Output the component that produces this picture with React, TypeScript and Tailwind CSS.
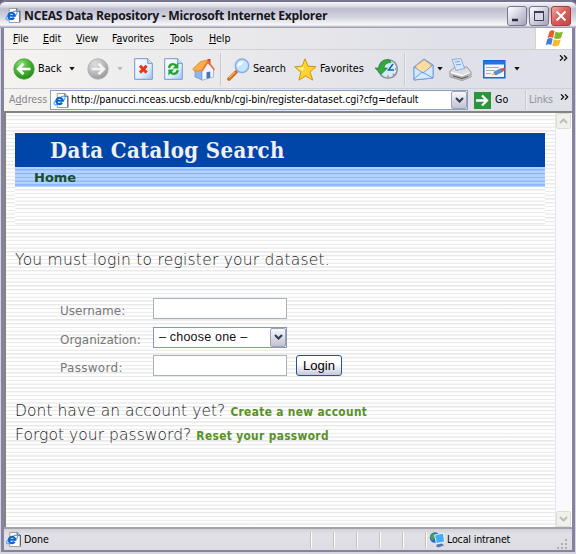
import React from "react";

const ui = "font-['DejaVu_Sans_Condensed','DejaVu_Sans',sans-serif] [font-stretch:condensed]";
const web = "font-['DejaVu_Sans',Verdana,sans-serif]";
const stripes = "bg-[repeating-linear-gradient(to_bottom,#ffffff_0px,#fdfdfd_2px,#e8e8e8_2.4px,#f0f0f0_3.4px,#ffffff_3.78px)]";
const link = "font-['DejaVu_Sans_Condensed','DejaVu_Sans',sans-serif] [font-stretch:condensed] text-[11.8px] font-bold tracking-[0.36px] text-[#579126]";

function Page({ className = "" }: { className?: string }) {
  return (
    <svg viewBox="0 0 16 16" className={"shrink-0 " + className}>
      <path d="M4 .5h8l3.3 3V15.5H4z" fill="#fffdf4" stroke="#96959f" />
      <path d="M12 .5v3h3.3V15" fill="none" stroke="#4d4d55" />
      <ellipse cx="6.5" cy="8" rx="7" ry="2.4" transform="rotate(-35 6.5 8)" fill="none" stroke="#4ba5f0" strokeWidth="1.2" />
      <path d="M3.3 8.3h6.6A3.4 3.4 0 1 0 9.2 10.6" fill="none" stroke="#1263d0" strokeWidth="2.3" />
    </svg>
  );
}

function Disc({ gray = false }: { gray?: boolean }) {
  return (
    <svg viewBox="0 0 22 22" className="h-[22px] w-[22px]">
      <defs>
        <radialGradient id={gray ? "dg" : "db"} cx=".35" cy=".25" r=".8">
          <stop stopColor={gray ? "#dedede" : "#8bdb72"} />
          <stop offset=".55" stopColor={gray ? "#bcbcbe" : "#42b32d"} />
          <stop offset="1" stopColor={gray ? "#98989c" : "#208718"} />
        </radialGradient>
      </defs>
      <circle cx="11" cy="11" r="10.2" fill={gray ? "url(#dg)" : "url(#db)"} stroke={gray ? "#aaa" : "#42993a"} strokeWidth=".8" />
      <path d={gray ? "M4.5 11h12M11.5 5.7l5.3 5.3-5.3 5.3" : "M17.5 11h-12M10.5 5.7 5.2 11l5.3 5.3"} fill="none" stroke={gray ? "#f4f4f4" : "#fff"} strokeWidth="2.7" />
    </svg>
  );
}

function Sheet({ refresh = false }: { refresh?: boolean }) {
  return (
    <svg viewBox="0 0 19 22" className="h-[22px] w-[19px]">
      <defs>
        <linearGradient id="sheet" x2="1" y2="1">
          <stop stopColor="#fff" /><stop offset=".6" stopColor="#e3efff" /><stop offset="1" stopColor="#9dc6fa" />
        </linearGradient>
      </defs>
      <path d="M.7.7h13l4.6 4.6v16H.7z" fill="url(#sheet)" stroke="#7195d2" />
      <path d="M13.7.7v4.6h4.6" fill="#d5e6fc" stroke="#7195d2" />
      {refresh ? (
        <g fill="none" stroke="#24a52d" strokeWidth="2.3">
          <path d="M5 10c.5-4.2 4.5-5 7.2-2.2M13.7 12c-.5 4.2-4.5 5-7.2 2.2" />
          <path d="M14.4 4.6v6H8.6zM4.4 17.4v-6h5.8z" fill="#24a52d" stroke="none" />
        </g>
      ) : <path d="m6 7.8 6.6 6.8m0-6.8L6 14.6" stroke="#ed3415" strokeWidth="3" />}
    </svg>
  );
}

function Home() {
  return (
    <svg viewBox="0 0 23 23" className="h-[23px] w-[23px]">
      <path d="m3 11 7 1v10l-7-3z" fill="#8fb5ea" stroke="#6d92c8" strokeWidth=".7" />
      <path d="m10 12.5 6-8 5.5 7V19L10 22.3z" fill="#f0f6ff" stroke="#7f9fce" strokeWidth=".7" />
      <path d="M15.5 1h3v7l-3-3z" fill="#d4432d" />
      <path d="M.7 11 8.5 3.6 16 2l-6 10.6L2.5 13z" fill="#ffad45" stroke="#de842c" strokeWidth=".8" />
      <path d="m10 13 6-9.5 6.5 8.5" fill="none" stroke="#e9763a" strokeWidth="1.6" />
      <path d="m14.5 14.2 3.8-.8v6.4l-3.8 1z" fill="#4f72b0" />
    </svg>
  );
}

function Glass() {
  return (
    <svg viewBox="0 0 23 23" className="h-[23px] w-[23px]">
      <path d="m2 21 7-7" stroke="#cf6b1d" strokeWidth="3.6" strokeLinecap="round" />
      <path d="m2 20 6-6" stroke="#ffb257" strokeWidth="1.2" />
      <circle cx="15" cy="7.8" r="6.7" fill="#c4e6ff" stroke="#83aee4" strokeWidth="1.5" />
      <path d="M10.5 8.5c0-3.5 2.5-5.3 6-5.1-1 2.5-3 4.3-6 5.1" fill="#fff" />
    </svg>
  );
}

function Star() {
  return (
    <svg viewBox="0 0 23 23" className="h-[23px] w-[23px]">
      <path d="m11 .8 3 7.3 8 .6-6 5.4 2.8 8-7.4-4.1L5 22.2l1.8-8L.7 8.8l7.5-.7z" fill="#ffd42e" stroke="#d0940f" strokeWidth="1" strokeLinejoin="round" />
      <path d="m11 3-1.7 6.3-6 .4L9 13z" fill="#fff3a0" />
    </svg>
  );
}

function History() {
  return (
    <svg viewBox="0 0 23 22" className="h-[22px] w-[23px]">
      <circle cx="13" cy="11" r="9.3" fill="#d3ecfa" stroke="#8a98a3" strokeWidth="1.6" />
      <path d="M15 2C9 .5 4.500 4 4 10H0l6 6.500L12.500 10H9c.3-3 2.500-5.500 7-5.500z" fill="#32a93c" stroke="#257b2e" strokeWidth=".7" />
      <path d="m18 6-4.500 6H19" fill="none" stroke="#1764a3" strokeWidth="1.500" />
      <path d="M13 17.500v1.800M20 11h1M18 16l1 1" stroke="#d56846" strokeWidth="1.500" />
    </svg>
  );
}

function Mail() {
  return (
    <svg viewBox="0 0 21 23" className="h-[23px] w-[21px]">
      <path d="m1 9 10-8 9 6v13L1 22z" fill="#8cbdf3" stroke="#7098cb" />
      <path d="m3 8 8-6 7 5-1 7-7 3-7-5z" fill="#ffdca0" stroke="#e3ac59" strokeWidth=".7" />
      <path d="m1 9 9 6 10-8v13L1 22z" fill="#d4eaff" stroke="#6b9ada" strokeWidth=".9" />
      <path d="m1 21 8-7 11 6" fill="none" stroke="#6b9ada" />
    </svg>
  );
}

function Printer() {
  return (
    <svg viewBox="0 0 23 23" className="h-[23px] w-[23px]">
      <path d="m1 13 5-4h12l4 5v5l-9 3.500L1 19z" fill="#dedede" stroke="#888" strokeWidth=".8" />
      <path d="m3 1.500 9-1 3.500 10L7 12.500z" fill="#d6e8ff" stroke="#7b9fd6" strokeWidth=".8" />
      <path d="m6 4 5-.6m-4 3.500 5-.6" stroke="#7ba0d0" />
      <path d="m1 14 12 3 9-3v5l-9 3.500L1 19z" fill="#b5b5b5" />
      <path d="m2 14.500 11 3 8-3" fill="none" stroke="#fff" strokeWidth="1.300" />
      <path d="m4 18 9 2.500 6-2" stroke="#555" fill="none" />
    </svg>
  );
}

function EditPage() {
  return (
    <svg viewBox="0 0 23 19" className="h-[19px] w-[23px]">
      <path d="M.8.8h21v17H.8z" fill="#f4f7fc" stroke="#1765d2" strokeWidth="1.500" />
      <path d="M1 1h21v3.500H1z" fill="#2573e2" />
      <path d="M3 7.500h13M3 10.500h9M3 13.500h5" stroke="#a7a9b0" />
      <path d="m8 15.500 3.500-3.500 1.500 2.800z" fill="#f3bb7a" />
      <path d="m11 12 6.500-3.200 2 2.700-6.700 3.500z" fill="#4f95e2" stroke="#2d68b0" strokeWidth=".6" />
      <path d="m17.500 8.500 3.500-.8 1.500 2.300-3 1.700z" fill="#e5532d" />
    </svg>
  );
}

function Flag() {
  return (
    <svg viewBox="0 0 18 17" className="h-[17px] w-[19px]">
      <path d="M4 1.500q2.500-2 5-.5L7.500 8q-3-1.500-5.500.3z" fill="#ec5a2b" /><path d="M10 1.500q3.500 2 7.500 0L15.500 8q-3.500 2-7 .3z" fill="#82b92e" />
      <path d="M1.700 9.200q2.800-2 5.500-.3L5.700 15q-2.700-1.500-5.500.2z" fill="#3d80da" /><path d="M8.300 9.300q3.500 1.800 7 0L13.700 15q-3.500 2.300-7 .4z" fill="#f5ba2d" />
    </svg>
  );
}

function Tri({ pale = false }: { pale?: boolean }) {
  return <svg viewBox="0 0 6 4" className="h-[4px] w-[6px]"><path d="M.3 0h5.400L3 3.600z" fill={pale ? "#b6b6b8" : "#111"} /></svg>;
}

function More() {
  return <svg viewBox="0 0 9 6" className="h-[6px] w-[9px]"><path d="m1 .3 2.700 2.700L1 5.700M5 .3l2.700 2.700L5 5.700" fill="none" stroke="#111" strokeWidth="1.300" /></svg>;
}

function Chevron({ up = false, color = "#333b50" }: { up?: boolean; color?: string }) {
  return <svg viewBox="0 0 9 6" className="h-[6px] w-[9px]"><path d={up ? "m1 5 3.500-3.500L8 5" : "m1 1 3.500 3.500L8 1"} fill="none" stroke={color} strokeWidth="2" /></svg>;
}

function Slot({ className, children }: { className: string; children: React.ReactNode }) {
  return <div className={"flex shrink-0 items-center whitespace-nowrap " + className}>{children}</div>;
}

function Divider({ className }: { className: string }) {
  return <div className={"w-[2px] shrink-0 border-l border-[#c9c8cc] bg-[#efeff2] " + className} />;
}

function Title() {
  return (
    <div className="flex h-[28px] items-center rounded-t-[6px] border-t-2 border-[#77758e] bg-[linear-gradient(#f8f8fb_0%,#d9d9e4_18%,#bdbdd0_26%,#d5d5e0_60%,#f8f8fa_88%,#9392a8_100%)] pl-[5px] pr-[5px]">
      <Page className="h-[15px] w-[16px]" />
      <div className="ml-[3px] w-[304px] whitespace-nowrap pt-[2px] font-['Open_Sans','Noto_Sans',sans-serif] text-[12.2px] font-bold leading-[20px] tracking-[-0.27px] text-[#16161b]">NCEAS Data Repository - Microsoft Internet Explorer</div>
      <div className="ml-auto flex gap-[2px] pt-[2px]">
        {["min", "max", "close"].map((k) => (
          <div key={k} className={"flex h-[20px] w-[20px] items-center justify-center rounded-[3px] border " + (k === "close" ? "border-[#a93d3f] bg-[linear-gradient(135deg,#f0aaa4,#d9605c_45%,#c04748)]" : "border-[#77768f] bg-[linear-gradient(135deg,#ffffff,#cdccdc_55%,#a3a2ba)]")}>
            <svg viewBox="0 0 14 14" className="h-[14px] w-[14px]">
              {k === "min" && <path d="M2 11h6" stroke="#292943" strokeWidth="2.500" />}
              {k === "max" && <g fill="#d9d9e6" stroke="#3c3b5a"><path d="M2.500 2.500h9v9h-9z" /><path d="M2 3h10" strokeWidth="2" /></g>}
              {k === "close" && <path d="m2.500 2.500 9 9m0-9-9 9" stroke="#fff" strokeWidth="2" />}
            </svg>
          </div>
        ))}
      </div>
    </div>
  );
}

function Menu() {
  const items = [["", "F", "ile", "w-[30px]"], ["", "E", "dit", "w-[33px]"], ["", "V", "iew", "w-[36px]"], ["F", "a", "vorites", "w-[58px]"], ["", "T", "ools", "w-[39px]"], ["", "H", "elp", "w-[30px]"]];
  return (
    <div className="flex h-[22px] border-b border-[#d0d0d5]">
      <div className={"flex grow items-center pl-[9px] pt-px text-[10.6px] text-black " + ui}>
        {items.map(([a, b, c, w]) => <div key={b} className={"shrink-0 whitespace-nowrap tracking-[-0.1px] " + w}>{a}<span className="underline underline-offset-1">{b}</span>{c}</div>)}
      </div>
      <div className="flex w-[37px] items-center justify-center border-l border-[#d6d3c8] bg-white"><Flag /></div>
    </div>
  );
}

function Toolbar() {
  return (
    <div className={"flex h-[39px] items-center border-b border-[#cfced4] pl-[9px] text-[10.8px] text-black " + ui}>
      <Slot className="w-[25px]"><Disc /></Slot>
      <Slot className="w-[31px]">Back</Slot>
      <Slot className="w-[18px]"><Tri /></Slot>
      <Slot className="w-[30px]"><Disc gray /></Slot>
      <Slot className="w-[17px]"><Tri pale /></Slot>
      <Slot className="w-[30px]"><Sheet /></Slot>
      <Slot className="w-[28px]"><Sheet refresh /></Slot>
      <Slot className="w-[28px]"><Home /></Slot>
      <Divider className="h-[33px]" />
      <Slot className="ml-[5px] w-[26px]"><Glass /></Slot>
      <Slot className="w-[41px] tracking-[-0.1px]">Search</Slot>
      <Slot className="w-[26px]"><Star /></Slot>
      <Slot className="w-[55px]">Favorites</Slot>
      <Slot className="w-[29px]"><History /></Slot>
      <Divider className="h-[33px]" />
      <Slot className="ml-[7px] w-[24px]"><Mail /></Slot>
      <Slot className="w-[12px]"><Tri /></Slot>
      <Slot className="w-[34px]"><Printer /></Slot>
      <Slot className="w-[31px]"><EditPage /></Slot>
      <Slot className="w-[45px]"><Tri /></Slot>
      <Slot className="pb-[23px]"><More /></Slot>
    </div>
  );
}

function Address() {
  return (
    <div className={"flex h-[22px] items-center pl-[5px] text-[10.6px] " + ui}>
      <Slot className="w-[41px] text-[#85858a]">A<span className="underline">d</span>dress</Slot>
      <div className="flex h-[20px] w-[418px] shrink-0 items-center border border-[#84a2c2] bg-white pl-[2px]">
        <Page className="h-[15px] w-[16px]" />
        <Slot className="ml-[2px] w-[380px] text-[10.6px] tracking-[-0.125px] text-black">http://panucci.nceas.ucsb.edu/knb/cgi-bin/register-dataset.cgi?cfg=default</Slot>
        <div className="flex h-[18px] w-[16px] shrink-0 items-center justify-center rounded-[2px] border border-[#a2a1b6] bg-[linear-gradient(#f7f7fc,#c2c1d3)]"><Chevron /></div>
      </div>
      <svg viewBox="0 0 17 17" className="ml-[6px] h-[17px] w-[17px] shrink-0"><path d="M0 0h17v17H0z" fill="#2a963b" /><path d="M2 8.500h11M8 3.500l5 5-5 5" fill="none" stroke="#fff" strokeWidth="2.300" /></svg>
      <Slot className="ml-[4px] w-[30px]">Go</Slot>
      <Divider className="h-[20px]" />
      <Slot className="ml-[2px] w-[31px] tracking-[-0.1px] text-[#92929a]">Links</Slot>
      <Slot className="pb-[7px]"><More /></Slot>
    </div>
  );
}

const inputBox = "h-[21px] w-[134px] border border-[#a8b2bc] bg-white";

function LoginForm() {
  return (
    <div className={"ml-[54px] mt-[27px] flex flex-col gap-[7.5px] text-[12px] text-[#777] " + web}>
      <div className="flex h-[21px]"><div className="w-[93px] pt-[4px]">Username:</div><div className={inputBox} /></div>
      <div className="flex h-[21px]">
        <div className="w-[93px] whitespace-nowrap pt-[4px]">Organization:</div>
        <div className="flex h-[21px] w-[134px] items-center justify-between border border-[#7f9db9] bg-white pl-[5px] font-['Liberation_Sans',Arial,sans-serif] text-[12.5px] text-[#111]">
          <span className="whitespace-nowrap tracking-[0.2px]">– choose one –</span>
          <div className="flex h-[19px] w-[16px] items-center justify-center rounded-[2px] border border-[#a2a1b6] bg-[linear-gradient(#f7f7fc,#c2c1d3)]"><Chevron /></div>
        </div>
      </div>
      <div className="flex h-[21px]">
        <div className="w-[93px] pt-[4px] tracking-[0.3px]">Password:</div><div className={inputBox} />
        <button className="ml-[9px] h-[21px] w-[46px] rounded-[3px] border border-[#245689] bg-[linear-gradient(#fff_40%,#c9c8db)] font-['Liberation_Sans',Arial,sans-serif] text-[13px] leading-[18px] text-black">Login</button>
      </div>
    </div>
  );
}

function Content() {
  return (
    <div className="flex h-[416px] border-l-2 border-t-2 border-[#85857f] bg-white">
      <div className={"w-[549px] overflow-hidden pt-[20px] " + stripes}>
        <div className="ml-[9px] w-[530px]">
          <div className="h-[34px] whitespace-nowrap bg-[#0046a8] pl-[35px] font-['DejaVu_Serif_Condensed','DejaVu_Serif',serif] text-[22px] font-bold leading-[35px] tracking-[0.38px] text-[#f0f0f0] [font-stretch:condensed]">Data Catalog Search</div>
          <div className={"h-[20px] bg-[repeating-linear-gradient(to_bottom,#b4d2ff_0px,#b4d2ff_2px,#86b4fa_2.4px,#94bfff_3.4px,#b4d2ff_3.78px)] pl-[19px] text-[13px] font-bold leading-[21px] text-[#164f2a] " + web}>Home</div>
          <div className={"h-[38px] " + stripes} />
        </div>
        <div className={"ml-[9px] mt-[24px] h-[22px] whitespace-nowrap text-[15.5px] font-extralight leading-[22px] tracking-[0.23px] text-[#1c1c1c] " + web}>You must login to register your dataset.</div>
        <LoginForm />
        <div className={"ml-[9px] mt-[24px] whitespace-nowrap text-[15.5px] font-extralight leading-[23px] tracking-[0.05px] text-[#1c1c1c] " + web}>
          <div>Dont have an account yet? <span className={link}>Create a new account</span></div>
          <div>Forgot your password? <span className={link}>Reset your password</span></div>
        </div>
      </div>
      <div className="flex w-[16px] flex-col justify-between border-l border-[#e6e5eb] bg-[#fafafe]">
        <div className="flex h-[16px] items-center justify-center rounded-[2px] border border-[#dcdcd4] bg-[#f0f0ec]"><Chevron up color="#bfbfb8" /></div>
        <div className="flex h-[16px] items-center justify-center rounded-[2px] border border-[#dcdcd4] bg-[#f0f0ec]"><Chevron color="#bfbfb8" /></div>
      </div>
    </div>
  );
}

function Status() {
  return (
    <div className={"flex h-[23px] items-center border-t-2 border-[#a3a2ab] bg-[linear-gradient(#d2d2da,#e0e0e6_25%,#dcdce2)] pl-[2px] text-[10.6px] text-black " + ui}>
      <Page className="h-[15px] w-[15px]" />
      <Slot className="ml-[3px] w-[286px] pt-px tracking-[-0.1px]">Done</Slot>
      {[0, 1, 2, 3, 4].map((n) => <div key={n} className="mr-[21px] h-[16px] w-[2px] shrink-0 border-l border-[#c5c1ae] bg-white" />)}
      <div className="h-[16px] w-[2px] shrink-0 border-l border-[#c5c1ae] bg-white" />
      <svg viewBox="0 0 17 16" className="ml-[2px] h-[16px] w-[17px] shrink-0">
        <circle cx="6" cy="5.500" r="5.200" fill="#2468cc" /><path d="M1 4 5 1l1 4-3 4z" fill="#49a742" />
        <path d="m5.500 3 9-2 1 9-8 1.500z" fill="#3faef2" stroke="#e8f4ff" /><path d="m8 12.500 5-1 2 2-6 2-2-1.500z" fill="#5b74b0" />
      </svg>
      <Slot className="ml-[1px] w-[110px] pt-px tracking-[-0.17px]">Local intranet</Slot>
      <svg viewBox="0 0 12 12" className="mt-[8px] h-[12px] w-[12px]"><path d="M8 1h2v2H8zM4 5h2v2H4zM8 5h2v2H8zM0 9h2v2H0zM4 9h2v2H4zM8 9h2v2H8z" fill="#b1aea3" /></svg>
    </div>
  );
}

export default function App() {
  return (
    <div className="h-[554px] w-[576px] overflow-hidden bg-[#66647d]">
      <div className="h-[554px] rounded-t-[7px] bg-[#d5d4df]">
        <Title />
        <div className="ml-px mr-px h-[524px] border-x-[3px] border-b-2 border-[#8583a0] bg-[linear-gradient(to_right,#f4f3f0,#dfe0e8_80%)]">
          <Menu />
          <Toolbar />
          <Address />
          <Content />
          <Status />
        </div>
      </div>
    </div>
  );
}
